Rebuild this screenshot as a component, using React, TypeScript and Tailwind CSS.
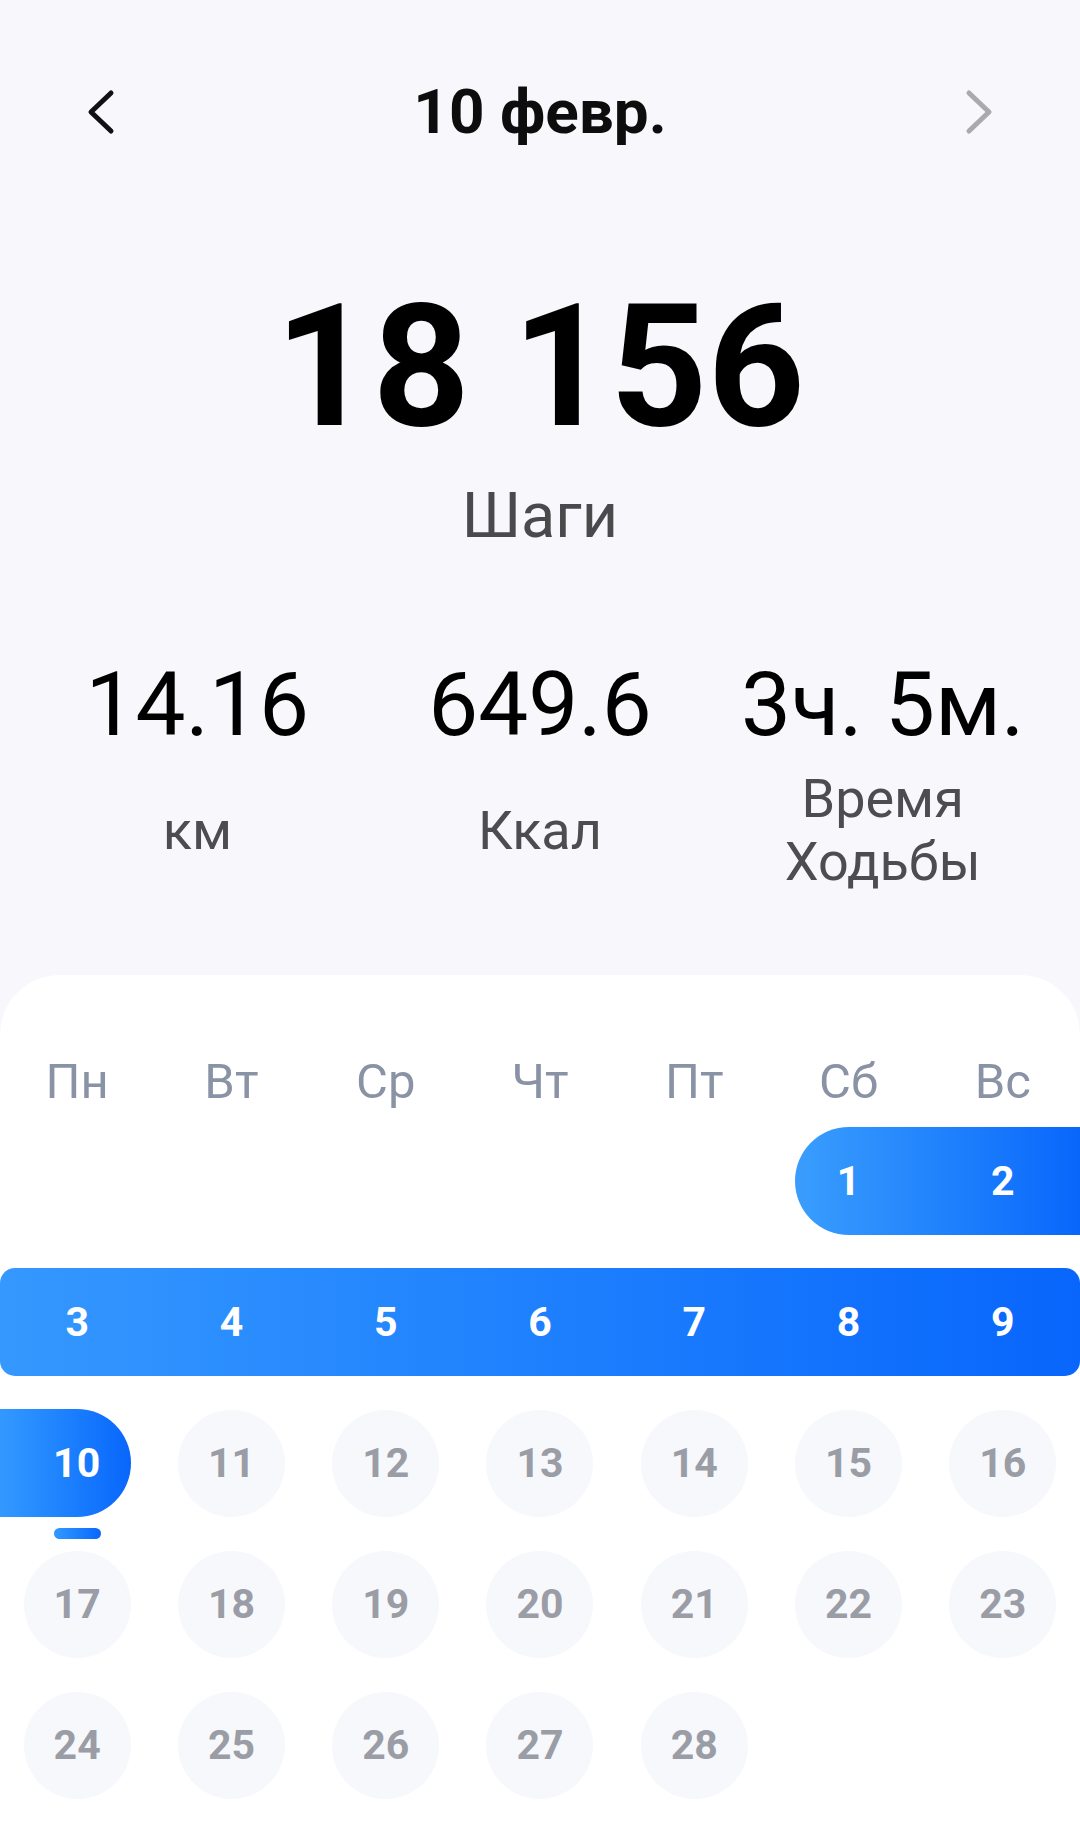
import React from 'react';

const weekDays = ['Пн', 'Вт', 'Ср', 'Чт', 'Пт', 'Сб', 'Вс'];

const ChevronLeft: React.FC = () => (
  <svg width="30" height="46" viewBox="0 0 30 46" fill="none">
    <polyline points="24,4 4,23 24,42" stroke="#111111" strokeWidth="5" strokeLinecap="round" strokeLinejoin="round" />
  </svg>
);

const ChevronRight: React.FC = () => (
  <svg width="30" height="46" viewBox="0 0 30 46" fill="none">
    <polyline points="6,4 26,23 6,42" stroke="#a9a9ae" strokeWidth="5" strokeLinecap="round" strokeLinejoin="round" />
  </svg>
);

const GrayDay: React.FC<{ day: number; col?: string }> = ({ day, col = '' }) => (
  <div className={`row-start-1 flex items-center justify-center ${col}`}>
    <div className="w-[107px] h-[107px] rounded-full bg-[#f7f8fb] flex items-center justify-center text-[41px] font-bold text-[#9a9da5] leading-none">
      {day}
    </div>
  </div>
);

const BlueNum: React.FC<{ day: number; col: string }> = ({ day, col }) => (
  <div className={`row-start-1 flex items-center justify-center text-[41px] font-bold text-white leading-none ${col}`}>
    {day}
  </div>
);

const App: React.FC = () => {
  return (
    <div className="w-[1080px] h-[1824px] bg-[#f8f8fc] flex flex-col overflow-hidden font-['Roboto',sans-serif]">
      {/* Header */}
      <div className="flex items-center justify-between px-[78px] pt-[72px] h-[152px]">
        <button className="w-[48px] h-[80px] flex items-center justify-center">
          <ChevronLeft />
        </button>
        <h1 className="text-[62px] font-bold text-[#0d0d0d] leading-none">10 февр.</h1>
        <button className="w-[48px] h-[80px] flex items-center justify-center">
          <ChevronRight />
        </button>
      </div>

      {/* Steps */}
      <div className="flex flex-col items-center pt-[130px]">
        <div className="text-[170px] font-bold text-black leading-none">18 156</div>
        <div className="mt-[32px] text-[63px] text-[#4a4a4c] leading-none">Шаги</div>
      </div>

      {/* Stats */}
      <div className="grid grid-cols-3 px-[26px] pt-[113px]">
        {['14.16', '649.6', '3ч. 5м.'].map((v) => (
          <div key={v} className="text-center text-[89px] text-black leading-none">
            {v}
          </div>
        ))}
      </div>
      <div className="grid grid-cols-3 px-[26px] mt-[18px] h-[126px] items-center text-[54px] leading-[63px] text-[#4d4d4f] text-center">
        <div>км</div>
        <div>Ккал</div>
        <div>
          <div>Время</div>
          <div>Ходьбы</div>
        </div>
      </div>

      {/* Calendar */}
      <div className="mt-[82px] flex-1 bg-white rounded-t-[60px] pt-[82px]">
        <div className="grid grid-cols-7">
          {weekDays.map((d) => (
            <div key={d} className="text-center text-[49px] text-[#8a93a5] leading-none">
              {d}
            </div>
          ))}
        </div>

        <div className="flex flex-col gap-[33px] mt-[21px]">
          {/* Row 1 */}
          <div className="grid grid-cols-7 h-[108px]">
            <div className="col-start-6 col-span-2 row-start-1 ml-[24px] rounded-l-full rounded-r-[15px] bg-linear-to-r from-[#3a9dfd] to-[#0966fb]" />
            <BlueNum day={1} col="col-start-6" />
            <BlueNum day={2} col="col-start-7" />
          </div>

          {/* Row 2 */}
          <div className="grid grid-cols-7 h-[108px]">
            <div className="col-start-1 col-span-7 row-start-1 rounded-[15px] bg-linear-to-r from-[#3598fe] to-[#0866fc]" />
            {[3, 4, 5, 6, 7, 8, 9].map((d, i) => (
              <BlueNum key={d} day={d} col={['col-start-1', 'col-start-2', 'col-start-3', 'col-start-4', 'col-start-5', 'col-start-6', 'col-start-7'][i]} />
            ))}
          </div>

          {/* Row 3 */}
          <div className="grid grid-cols-7 h-[108px]">
            <div className="relative col-start-1 row-start-1 mr-[23px] rounded-l-[15px] rounded-r-full bg-linear-to-r from-[#3399ff] to-[#0966fc] flex items-center justify-center">
              <span className="text-[41px] font-bold text-white leading-none translate-x-[11px]">10</span>
              <div className="absolute top-[119px] left-[54px] w-[47px] h-[11px] rounded-full bg-linear-to-r from-[#3399ff] to-[#0966fc]" />
            </div>
            {[11, 12, 13, 14, 15, 16].map((d, i) => (
              <GrayDay key={d} day={d} col={['col-start-2', 'col-start-3', 'col-start-4', 'col-start-5', 'col-start-6', 'col-start-7'][i]} />
            ))}
          </div>

          {/* Row 4 */}
          <div className="grid grid-cols-7 h-[108px]">
            {[17, 18, 19, 20, 21, 22, 23].map((d) => (
              <GrayDay key={d} day={d} />
            ))}
          </div>

          {/* Row 5 */}
          <div className="grid grid-cols-7 h-[108px]">
            {[24, 25, 26, 27, 28].map((d) => (
              <GrayDay key={d} day={d} />
            ))}
          </div>
        </div>
      </div>
    </div>
  );
};

export default App;
